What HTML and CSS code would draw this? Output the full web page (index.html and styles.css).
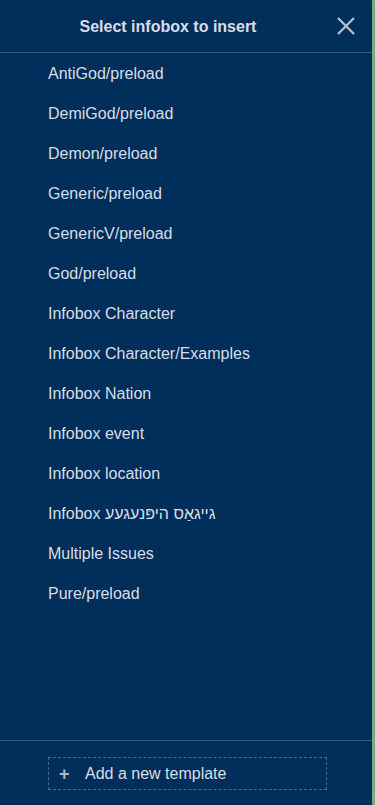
FILE: index.html
```html
<!DOCTYPE html>
<html>
<head>
<meta charset="utf-8">
<link rel="stylesheet" href="styles.css">
</head>
<body>
<div class="page">
  <div class="panel">
    <div class="header">
      <div class="title">Select infobox to insert</div>
      <button class="close" aria-label="Close">
        <svg width="18" height="18" viewBox="0 0 18 18"><path d="M1 1 L17 17 M17 1 L1 17" stroke="#b9c3d1" stroke-width="2.2" fill="none"/></svg>
      </button>
    </div>
    <ul class="list">
      <li>AntiGod/preload</li>
      <li>DemiGod/preload</li>
      <li>Demon/preload</li>
      <li>Generic/preload</li>
      <li>GenericV/preload</li>
      <li>God/preload</li>
      <li>Infobox Character</li>
      <li>Infobox Character/Examples</li>
      <li>Infobox Nation</li>
      <li>Infobox event</li>
      <li>Infobox location</li>
      <li>Infobox <span dir="rtl">גייגאַס היפּנעגעע</span></li>
      <li>Multiple Issues</li>
      <li>Pure/preload</li>
    </ul>
    <div class="footer">
      <div class="add"><span class="plus">+</span><span>Add a new template</span></div>
    </div>
  </div>
</div>
</body>
</html>
```
FILE: styles.css
```css
html, body { margin: 0; padding: 0; }
body { background: #5a8f6e; font-family: "Liberation Sans", Arial, sans-serif; }
.page { width: 375px; height: 805px; display: flex; background: linear-gradient(to right, #0b2f57 0, #0b2f57 372px, #6fae86 372px); }
.panel { width: 372px; height: 805px; background: #002e5a; border-radius: 0 12px 12px 0; display: flex; flex-direction: column; box-sizing: border-box; }
.header { height: 53px; box-sizing: border-box; border-bottom: 1px solid #3b5a7e; display: flex; align-items: center; justify-content: center; position: relative; flex: none; padding: 1px 36px 0 0; }
.title { color: #d9dee6; font-weight: bold; font-size: 16px; }
.close { position: absolute; right: 17px; top: 17px; background: none; border: 0; padding: 0; width: 18px; height: 18px; display: flex; }
.list { list-style: none; margin: 0; padding: 11px 0 0 48px; flex: 1; }
.list li { height: 40px; line-height: 20px; color: #d9dee6; font-size: 16px; }
.footer { height: 65px; border-top: 1px solid #3b5a7e; flex: none; padding: 16px 0 0 48px; box-sizing: border-box; }
.add { width: 279px; height: 33px; border: 1px dashed #4a6a8e; box-sizing: border-box; display: flex; align-items: center; color: #d9dee6; font-size: 16px; padding-left: 10px; }
.plus { color: #a9b7c8; font-size: 18px; font-weight: bold; width: 26px; line-height: 1; }
```
